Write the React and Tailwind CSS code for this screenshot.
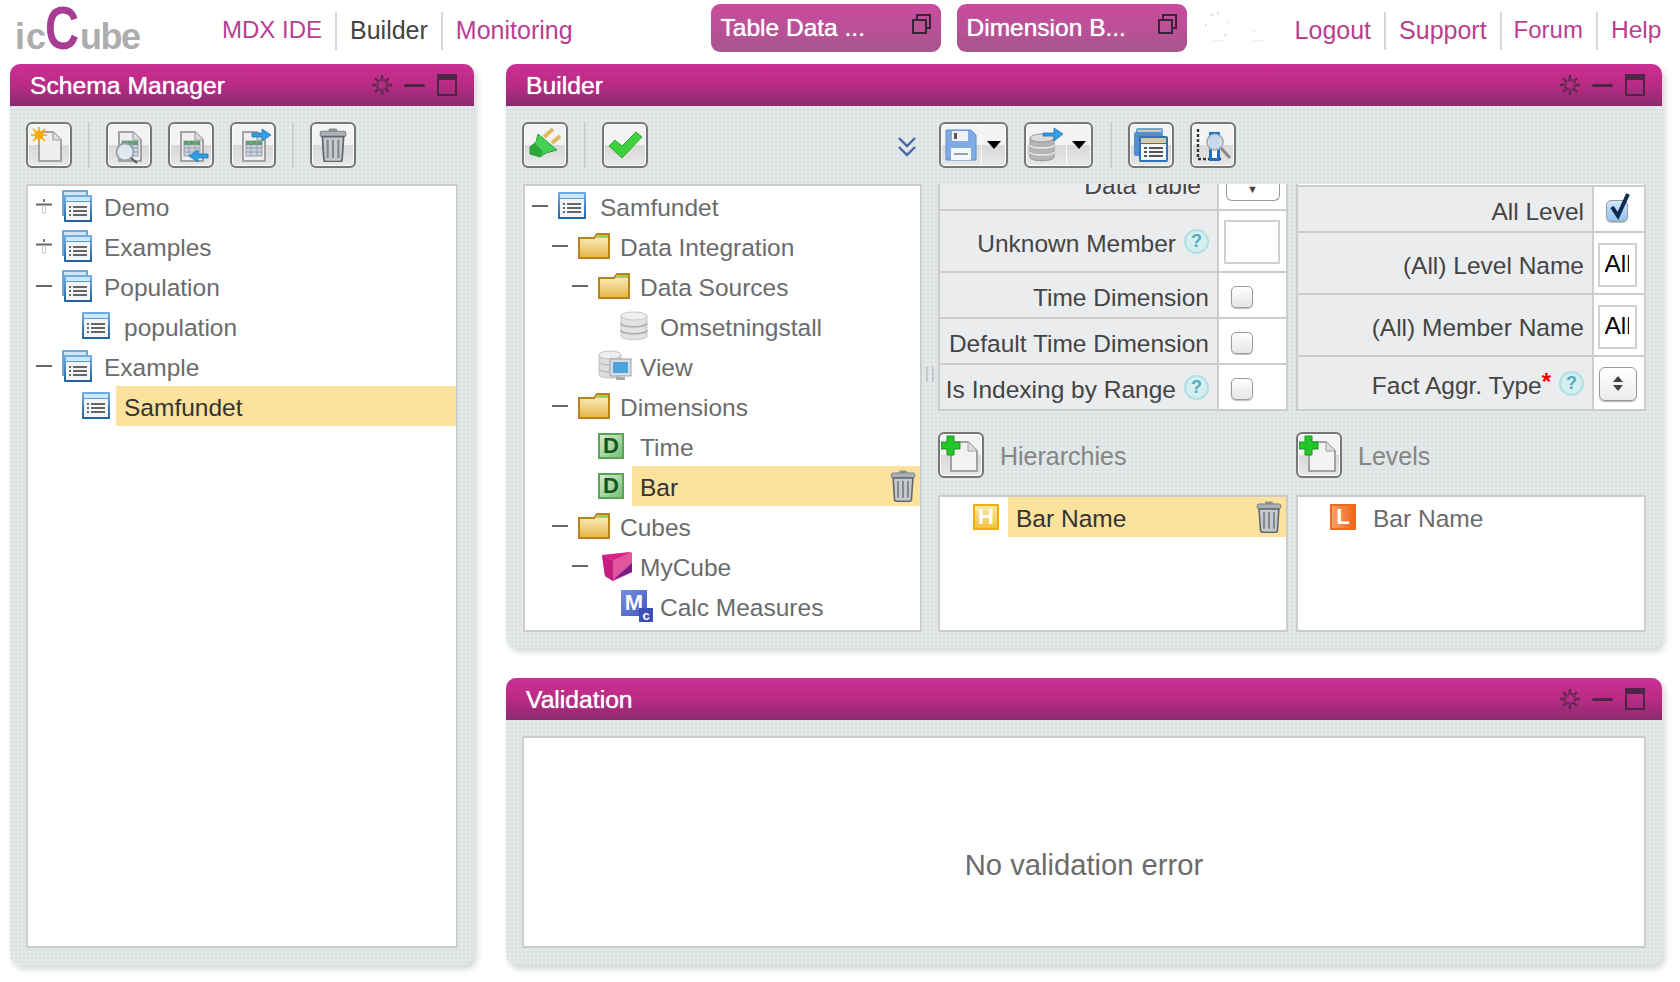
import React from 'react';

const FONT = "font-['Liberation_Sans',Arial,sans-serif]";
const PANEL = 'rounded-[10px] bg-[#e3e8e9] bg-[radial-gradient(#d8dfe0_1px,transparent_1px)] bg-[length:4px_4px] shadow-[3px_4px_6px_rgba(0,0,0,0.16)]';

const Gear = () => (
  <svg width="22" height="22" viewBox="0 0 22 22" fill="none" stroke="#5d2a50">
    <circle cx="11" cy="11" r="5" strokeWidth="2.5" strokeDasharray="2 1" />
    <path d="M11 1v4M11 17v4M1 11h4M17 11h4M4 4l3 3M15 15l3 3M18 4l-3 3M7 15l-3 3" strokeWidth="2.4" />
  </svg>
);

const WindowIcon = () => (
  <svg width="20" height="22" viewBox="0 0 20 22">
    <rect x="1" y="1" width="18" height="20" fill="none" stroke="#4d2545" strokeWidth="2" />
    <rect x="1" y="1" width="18" height="5" fill="#4d2545" />
  </svg>
);

const PanelHeader = ({ title }) => (
  <div className="flex h-[42px] shrink-0 items-center justify-between rounded-t-[10px] bg-linear-to-b from-[#cd2f93] via-[#b92b85] to-[#8a2a70] pl-[20px] pr-[17px]">
    <span className="pt-[2px] text-[24.7px] text-white [text-shadow:0_0_1px_#fff]">{title}</span>
    <div className="flex items-center">
      <Gear />
      <div className="ml-[11px] h-[3px] w-[21px] rounded-sm bg-[#4d2545]" />
      <div className="ml-[12px]"><WindowIcon /></div>
    </div>
  </div>
);

const TableGlyph = ({ x = 0, y = 0 }) => (
  <g transform={`translate(${x} ${y})`}>
    <defs>
      <linearGradient id="tableEdge" x1="0" y1="0" x2="0" y2="1">
        <stop offset="0" stopColor="#6fb0e6" />
        <stop offset="1" stopColor="#1f62a3" />
      </linearGradient>
    </defs>
    <rect width="28" height="27" rx="1" fill="url(#tableEdge)" />
    <rect x="2" y="2" width="24" height="4" fill="#cfe6f8" />
    <rect x="2" y="7" width="24" height="18" fill="#f3f6f9" />
    <path d="M5 12h2M5 16h2M5 20h2M9 12h14M9 16h14M9 20h14" stroke="#666" strokeWidth="2" />
  </g>
);

const TableIcon = () => (
  <svg width="28" height="28" viewBox="0 0 28 28"><TableGlyph /></svg>
);

const TablesIcon = () => (
  <svg width="30" height="32" viewBox="0 0 30 32">
    <rect width="26" height="26" rx="1" fill="#6aa6dc" />
    <rect x="2" y="2" width="22" height="3" fill="#cfe6f8" />
    <TableGlyph x="2" y="5" />
  </svg>
);

const FolderIcon = () => (
  <svg width="32" height="26" viewBox="0 0 32 26">
    <defs>
      <linearGradient id="folderFill" x1="0" y1="0" x2="0" y2="1">
        <stop offset="0" stopColor="#fdf2cf" />
        <stop offset="1" stopColor="#e6b544" />
      </linearGradient>
    </defs>
    <path d="M1 25V5h15l3-4h12v24z" fill="url(#folderFill)" stroke="#b5841c" strokeWidth="2" />
    <path d="M20 2h10v3H18z" fill="#a8c85a" />
  </svg>
);

const DbIcon = () => (
  <svg width="28" height="30" viewBox="0 0 28 30" className="ml-[2px]">
    <path d="M1 5v20c0 5 26 5 26 0V5z" fill="#e2e2e2" stroke="#c8c8c8" />
    <ellipse cx="14" cy="5" rx="13" ry="4" fill="#f0f0f0" stroke="#c8c8c8" />
    <path d="M1 12c0 5 26 5 26 0M1 19c0 5 26 5 26 0" fill="none" stroke="#b0b0b0" strokeWidth="1.5" />
  </svg>
);

const ViewIcon = () => (
  <svg width="34" height="32" viewBox="0 0 34 32">
    <path d="M1 5v20c0 4 22 4 22 0V5z" fill="#dedede" stroke="#c4c4c4" />
    <ellipse cx="12" cy="5" rx="11" ry="4" fill="#efefef" stroke="#c4c4c4" />
    <path d="M1 12c0 4 22 4 22 0M1 19c0 4 22 4 22 0" fill="none" stroke="#b0b0b0" />
    <rect x="12" y="9" width="21" height="17" fill="#d8dde2" stroke="#9aa2aa" />
    <rect x="15" y="12" width="15" height="11" fill="#4ba3df" />
    <rect x="18" y="27" width="9" height="3" fill="#aaa" />
  </svg>
);

const CubeIcon = () => (
  <svg width="32" height="31" viewBox="0 0 32 31" className="ml-[3px]">
    <path d="M1 4L29 1l2 20-19 9-8-5z" fill="#d81f8c" />
    <path d="M1 4l11 5 19-8v20l-19 9z" fill="#e2569f" />
    <path d="M12 29l19-8V12z" fill="#7b1f86" />
    <path d="M1 4l11 6v20l-8-5z" fill="#c51f80" />
  </svg>
);

const LetterIcon = ({ letter, box, color }) => (
  <div className={`flex h-[26px] w-[26px] items-center justify-center border-2 text-[22px] font-bold leading-none ${box} ${color}`}>{letter}</div>
);

const DimIcon = () => (
  <LetterIcon letter="D" box="border-[#57a657] bg-linear-to-br from-[#d6ecd0] to-[#7ec07a]" color="text-[#0f5a18]" />
);

const HierIcon = () => (
  <LetterIcon letter="H" box="border-[#f0ad10] bg-linear-to-b from-[#fbe7a4] to-[#f3c23c]" color="text-white" />
);

const LevelIcon = () => (
  <LetterIcon letter="L" box="border-[#ee6a1a] bg-linear-to-r from-[#f7a268] to-[#ee6412]" color="text-white" />
);

const CalcIcon = () => (
  <div className="relative ml-[3px] h-[32px] w-[32px]">
    <div className="flex h-[26px] w-[26px] items-center justify-center bg-linear-to-br from-[#7b8fe0] to-[#3f55c2] text-[22px] font-bold leading-none text-white">M</div>
    <div className="absolute bottom-0 right-0 flex h-[14px] w-[14px] items-center justify-center bg-[#3d50b5] text-[13px] font-bold leading-none text-white">c</div>
  </div>
);

const TrashIcon = ({ size = 26 }) => (
  <svg width={size} height={size * 1.22} viewBox="0 0 26 32">
    <rect x="9" y="0.5" width="8" height="3" rx="1" fill="#8c9298" />
    <rect x="1" y="3" width="24" height="5" rx="2" fill="#aab0b5" stroke="#7c8288" />
    <path d="M3 8h20l-1.5 22c0 1-1 1.5-2 1.5h-13c-1 0-2-.5-2-1.5z" fill="#c6cacd" stroke="#5f666c" strokeWidth="1.6" />
    <path d="M8 11v17M13 11v17M18 11v17" stroke="#82888e" strokeWidth="2" />
  </svg>
);

const Expander = ({ type }) => {
  if (type === 'minus') return <div className="h-[2px] w-[16px] bg-[#666]" />;
  if (type === 'plus') {
    return (
      <svg width="16" height="16" viewBox="0 0 16 16">
        <path d="M0 6.5h16" stroke="#666" strokeWidth="2" />
        <path d="M8 1v3" stroke="#777" strokeWidth="2" />
        <path d="M6.5 8h3v7h-3z" fill="none" stroke="#c4c8cc" />
      </svg>
    );
  }
  return null;
};

const levelPadding = ['pl-[7px]', 'pl-[27px]', 'pl-[47px]', 'pl-[67px]'];

const RowLabel = ({ label, selected, trash }) => (
  <div className={`-ml-[8px] flex h-full flex-1 items-center justify-between pl-[8px] pr-[4px] ${selected ? 'bg-[#fce29c] text-[#333]' : 'text-[#6b6b6b]'}`}>
    <span className="pt-[4px]">{label}</span>
    {trash && <TrashIcon />}
  </div>
);

const TreeRow = ({ level, expander, icon, label, selected, trash }) => (
  <div className={`flex h-10 items-center ${levelPadding[level]}`}>
    <div className="flex w-[16px] shrink-0 items-center justify-center"><Expander type={expander} /></div>
    <div className="ml-[10px] flex w-[42px] shrink-0 items-center">{icon}</div>
    <RowLabel label={label} selected={selected} trash={trash} />
  </div>
);

const schemaRows = [
  { level: 0, expander: 'plus', icon: <TablesIcon />, label: 'Demo' },
  { level: 0, expander: 'plus', icon: <TablesIcon />, label: 'Examples' },
  { level: 0, expander: 'minus', icon: <TablesIcon />, label: 'Population' },
  { level: 1, icon: <TableIcon />, label: 'population' },
  { level: 0, expander: 'minus', icon: <TablesIcon />, label: 'Example' },
  { level: 1, icon: <TableIcon />, label: 'Samfundet', selected: true },
];

const builderRows = [
  { level: 0, expander: 'minus', icon: <TableIcon />, label: 'Samfundet' },
  { level: 1, expander: 'minus', icon: <FolderIcon />, label: 'Data Integration' },
  { level: 2, expander: 'minus', icon: <FolderIcon />, label: 'Data Sources' },
  { level: 3, icon: <DbIcon />, label: 'Omsetningstall' },
  { level: 2, icon: <ViewIcon />, label: 'View' },
  { level: 1, expander: 'minus', icon: <FolderIcon />, label: 'Dimensions' },
  { level: 2, icon: <DimIcon />, label: 'Time' },
  { level: 2, icon: <DimIcon />, label: 'Bar', selected: true, trash: true },
  { level: 1, expander: 'minus', icon: <FolderIcon />, label: 'Cubes' },
  { level: 2, expander: 'minus', icon: <CubeIcon />, label: 'MyCube' },
  { level: 3, icon: <CalcIcon />, label: 'Calc Measures' },
];

const BTN = 'rounded-[6px] border-2 border-[#777] bg-[linear-gradient(#f3f3f3_50%,#d8d8d8_50%,#e8e8e8)] shadow-[inset_0_0_0_1px_#fafafa]';

const ToolBtn = ({ children, className = '' }) => (
  <div className={`flex h-[46px] w-[46px] shrink-0 items-center justify-center ${BTN} ${className}`}>
    {children}
  </div>
);

const ToolSep = () => <div className="mx-[16px] h-[46px] w-[2px] shrink-0 bg-[#cdd1d2]" />;

const Doc = ({ children }) => (
  <svg width="38" height="38" viewBox="0 0 38 38">
    <path d="M9 6h14l8 8v21H9z" fill="#efefef" stroke="#a2a2a2" strokeWidth="2" />
    <path d="M23 6v8h8" fill="#dedede" stroke="#a2a2a2" strokeWidth="1.2" />
    {children}
  </svg>
);

const Grid = () => (
  <g>
    <rect x="12" y="15" width="16" height="15" fill="#c9d2de" stroke="#97a2af" />
    <rect x="12" y="15" width="16" height="4" fill="#5f9e6a" />
    <path d="M17 15v15M23 15v15M12 22h16M12 26h16" stroke="#97a2af" />
  </g>
);

const NewFileIcon = () => (
  <Doc>
    <path d="M9 1v16M1 9h16M3 3l12 12M15 3L3 15" stroke="#f9a400" strokeWidth="1.6" />
    <circle cx="9" cy="9" r="4.5" fill="#ffa800" />
  </Doc>
);

const SearchDocIcon = () => (
  <Doc>
    <Grid />
    <circle cx="15" cy="26" r="8.5" fill="#e2ecf3" fillOpacity="0.9" stroke="#9aa3ad" strokeWidth="1.8" />
    <path d="M21 32l6 5" stroke="#555" strokeWidth="2" />
  </Doc>
);

const ImportDocIcon = () => (
  <Doc>
    <Grid />
    <path d="M36 28H26v-4l-9 6 9 6v-4h10z" fill="#2f9fe8" stroke="#1f74b8" strokeWidth="0.8" />
  </Doc>
);

const ExportDocIcon = () => (
  <Doc>
    <Grid />
    <path d="M18 7h10V3l9 6-9 6v-4H18z" fill="#2f9fe8" stroke="#1f74b8" strokeWidth="0.8" />
  </Doc>
);

const PlugIcon = () => (
  <svg width="38" height="38" viewBox="0 0 38 38">
    <path d="M18 11l9-8M26 17l8-7" stroke="#e0b860" strokeWidth="4" />
    <path d="M12 8l19 16-11 3-6 4-10-3v-7l6-5z" fill="#45d057" stroke="#2da23a" />
    <path d="M4 28v-7l5-4 8 9-3 5z" fill="#27a838" />
  </svg>
);

const CheckIcon = () => (
  <svg width="36" height="30" viewBox="0 0 36 30">
    <path d="M2 16l6-6 7 6L29 2l6 5-20 21z" fill="#3fd03d" stroke="#2fa82e" />
  </svg>
);

const FloppyIcon = () => (
  <svg width="32" height="32" viewBox="0 0 32 32">
    <path d="M1 1h25l5 5v25H1z" fill="#7eabe4" stroke="#5f8fd0" />
    <rect x="7" y="2" width="16" height="10" fill="#eef2f7" />
    <rect x="9" y="4" width="3" height="6" fill="#555" />
    <rect x="6" y="19" width="20" height="12" fill="#f3f6fa" />
    <path d="M9 25h14" stroke="#8fa2b8" strokeWidth="2" />
  </svg>
);

const DbExportIcon = () => (
  <svg width="36" height="36" viewBox="0 0 36 36">
    <path d="M2 11v19c0 5 24 5 24 0V11z" fill="#b5b5b5" stroke="#969696" />
    <ellipse cx="14" cy="11" rx="12" ry="4" fill="#dcdcdc" stroke="#969696" />
    <path d="M2 18c0 4 24 4 24 0M2 25c0 4 24 4 24 0" fill="none" stroke="#ececec" strokeWidth="1.5" />
    <path d="M15 6h11V1l9 6-9 7V9H15z" fill="#2f9fe8" stroke="#1f74b8" strokeWidth="0.8" />
  </svg>
);

const TablesBigIcon = () => (
  <svg width="36" height="36" viewBox="0 0 36 36">
    <rect x="3" y="1" width="27" height="24" rx="2" fill="#6aa6dc" />
    <rect x="5" y="3" width="23" height="4" fill="#d9c8a8" />
    <rect x="1" y="5" width="28" height="24" rx="2" fill="#4f8fd0" />
    <rect x="6" y="9" width="29" height="26" rx="2" fill="#2f74b5" />
    <rect x="8" y="11" width="25" height="5" fill="#d9c8a8" />
    <rect x="8" y="17" width="25" height="16" fill="#f3f6f9" />
    <path d="M11 21h3M11 25h3M11 29h3M16 21h14M16 25h14M16 29h14" stroke="#555" strokeWidth="2" />
  </svg>
);

const ChartSearchIcon = () => (
  <svg width="38" height="38" viewBox="0 0 38 38">
    <path d="M4 3v30h24" fill="none" stroke="#333" strokeWidth="2.4" strokeDasharray="3 2" />
    <rect x="15" y="6" width="11" height="29" rx="1" fill="#1d6fc2" />
    <rect x="18" y="24" width="5" height="8" fill="#fff" />
    <circle cx="21" cy="16" r="8" fill="#d7e6f1" fillOpacity="0.9" stroke="#a0a8b0" strokeWidth="1.6" />
    <path d="M27 22l9 10" stroke="#888" strokeWidth="3" />
  </svg>
);

const Caret = () => <div className="h-0 w-0 border-x-[7px] border-t-[8px] border-x-transparent border-t-black" />;

const SplitBtn = ({ children }) => (
  <div className={`flex h-[46px] w-[69px] shrink-0 ${BTN}`}>
    <div className="flex w-[41px] items-center justify-center border-r border-[#fafafa]">{children}</div>
    <div className="flex flex-1 items-center justify-center"><Caret /></div>
  </div>
);

const Help = () => (
  <div className="ml-[8px] flex h-[25px] w-[25px] shrink-0 items-center justify-center rounded-full border-2 border-[#aee0e4] bg-[#d5eff1] text-[18px] font-bold leading-none text-[#4fadbd]">?</div>
);

const Checkbox = ({ checked }) => (
  <div className={`relative h-[22px] w-[22px] rounded-[5px] border border-[#9a9a9a] shadow-[0_1px_1px_rgba(0,0,0,0.25)] ${checked ? 'bg-linear-to-b from-[#cfe6fa] to-[#8fc2ee]' : 'bg-linear-to-b from-white to-[#e6e6e6]'}`}>
    {checked && (
      <svg width="26" height="30" viewBox="0 0 26 30" className="absolute -top-[9px] left-0">
        <path d="M5 15l6 9L21 2" fill="none" stroke="#0d2a4d" strokeWidth="4" />
      </svg>
    )}
  </div>
);

const ClippedInput = () => (
  <div className="mr-[4px] mt-[3px] h-[44px] w-[39px] border-2 border-[#d0d0d0] bg-white pl-[5px] leading-[38px] text-black">
    <div className="w-[24px] overflow-hidden">All</div>
  </div>
);

const FormRow = ({ height, label, help, required, children, labelWidth }) => (
  <div className={`flex border-b-2 border-[#cccccc] ${height}`}>
    <div className={`flex items-center justify-end border-r-2 border-[#cccccc] bg-[#ebecee] pr-[8px] text-[#444] ${labelWidth}`}>
      <span className="pt-[6px]">{label}</span>
      {required && <span className="self-start pt-[13px] text-[24px] font-bold leading-none text-[#f00000]">*</span>}
      {help && <Help />}
    </div>
    <div className="flex flex-1 items-center justify-center bg-white">{children}</div>
  </div>
);

const ListRow = ({ icon, label, selected, className }) => (
  <div className={`flex h-10 items-center ${className}`}>
    <div className="flex w-[43px] shrink-0 items-center">{icon}</div>
    <RowLabel label={label} selected={selected} trash={selected} />
  </div>
);

const AddIcon = () => (
  <svg width="40" height="40" viewBox="0 0 40 40">
    <path d="M10 7h17l9 9v20H10z" fill="#f2f2f2" stroke="#a2a2a2" strokeWidth="2" />
    <path d="M27 7v9h9" fill="#dedede" stroke="#a2a2a2" />
    <path d="M6 1h7v6h6v7h-6v6H6v-6H0V7h6z" fill="#22c52a" stroke="#149a1c" />
  </svg>
);

const Logo = () => (
  <div className="flex h-[50px] w-[126px] items-baseline font-bold text-[#adadad]">
    <span className="w-[30px] text-[36px] leading-[50px] tracking-[1px]">ic</span>
    <span className="w-[35px] origin-left scale-x-[0.76] text-[62px] leading-[50px] text-[#a63d92]">C</span>
    <span className="text-[36px] leading-[50px] tracking-[-1.5px]">ube</span>
  </div>
);

const NavSep = () => <div className="h-[38px] w-[2px] bg-[#d6d6d6]" />;

const Restore = () => (
  <svg width="19" height="20" viewBox="0 0 19 20" fill="none" stroke="#3a2335" strokeWidth="2">
    <rect x="1" y="6" width="13" height="13" />
    <path d="M5 5V1h13v13h-3" />
  </svg>
);

const TabButton = ({ label, className = '' }) => (
  <div className={`flex h-[48px] w-[230px] shrink-0 items-center justify-between rounded-[9px] bg-linear-to-b from-[#cb4a9f] to-[#a8558e] px-[10px] text-white [text-shadow:0_0_1px_#fff] ${className}`}>
    <span className="pb-[1px]">{label}</span>
    <div className="pb-[8px]"><Restore /></div>
  </div>
);

// faint specks left in the header next to the tabs
const Specks = () => (
  <svg width="80" height="50" viewBox="0 0 80 50" className="shrink-0">
    <g fill="#dfe2f0">
      <circle cx="9" cy="15" r="1.6" />
      <circle cx="15" cy="13" r="1.2" />
      <circle cx="3" cy="25" r="1.2" />
      <circle cx="25" cy="22" r="1.6" fill="#eeeeee" />
      <circle cx="22" cy="35" r="1.6" />
      <circle cx="51" cy="31" r="1.4" fill="#eeeeee" />
    </g>
    <path d="M10 41h12M50 41h12" stroke="#f3dfe9" />
  </svg>
);

export default function App() {
  return (
    <div className={`h-[982px] w-[1680px] overflow-hidden bg-white text-[24.5px] leading-[28px] ${FONT}`}>
      {/* Top bar */}
      <div className="flex h-[64px]">
        <div className="ml-[15px] mt-[3px]"><Logo /></div>
        <div className="ml-[81px] mt-[12px] flex h-[38px] items-center text-[25px] text-[#b9408f]">
          <span className="pb-[2px] text-[24px]">MDX IDE</span>
          <div className="mx-[13px]"><NavSep /></div>
          <span className="pb-[2px] text-[#444]">Builder</span>
          <div className="mx-[13px]"><NavSep /></div>
          <span className="pb-[2px]">Monitoring</span>
        </div>
        <div className="ml-[138px] mt-[4px] flex">
          <TabButton label="Table Data ..." />
          <TabButton label="Dimension B..." className="ml-[16px]" />
        </div>
        <div className="ml-[16px]"><Specks /></div>
        <div className="ml-[12px] mt-[12px] flex h-[38px] items-center text-[25px] text-[#b9408f]">
          <span className="pb-[2px]">Logout</span>
          <div className="mx-[13px]"><NavSep /></div>
          <span className="pb-[2px]">Support</span>
          <div className="ml-[13px] mr-[12px]"><NavSep /></div>
          <span className="pb-[2px] text-[24px]">Forum</span>
          <div className="mx-[13px]"><NavSep /></div>
          <span className="pb-[2px] text-[24.5px]">Help</span>
        </div>
      </div>

      <div className="flex pl-[10px]">
        {/* Schema Manager */}
        <div className={`flex h-[901px] w-[464px] flex-col ${PANEL}`}>
          <PanelHeader title="Schema Manager" />
          <div className="flex h-[78px] shrink-0 items-start pl-[16px] pt-[16px]">
            <ToolBtn><NewFileIcon /></ToolBtn>
            <ToolSep />
            <ToolBtn><SearchDocIcon /></ToolBtn>
            <ToolBtn className="ml-[16px]"><ImportDocIcon /></ToolBtn>
            <ToolBtn className="ml-[16px]"><ExportDocIcon /></ToolBtn>
            <ToolSep />
            <ToolBtn><TrashIcon size={28} /></ToolBtn>
          </div>
          <div className="ml-[16px] h-[764px] w-[432px] border-2 border-[#cccccc] bg-white pl-[1px]">
            {schemaRows.map((row) => <TreeRow key={row.label} {...row} />)}
          </div>
        </div>

        <div className="ml-[32px] flex w-[1156px] flex-col">
          {/* Builder */}
          <div className={`flex h-[584px] flex-col ${PANEL}`}>
            <PanelHeader title="Builder" />
            <div className="flex h-[78px] shrink-0 items-start pl-[16px] pt-[16px]">
              <ToolBtn><PlugIcon /></ToolBtn>
              <ToolSep />
              <ToolBtn><CheckIcon /></ToolBtn>
              <svg width="20" height="22" viewBox="0 0 20 22" fill="none" stroke="#4a66a8" strokeWidth="2.4" className="ml-[249px] mt-[14px] shrink-0">
                <path d="M2 2l8 8 8-8M2 11l8 8 8-8" />
              </svg>
              <div className="ml-[22px]"><SplitBtn><FloppyIcon /></SplitBtn></div>
              <div className="ml-[16px]"><SplitBtn><DbExportIcon /></SplitBtn></div>
              <div className="w-[1px] shrink-0" />
              <ToolSep />
              <ToolBtn><TablesBigIcon /></ToolBtn>
              <ToolBtn className="ml-[16px]"><ChartSearchIcon /></ToolBtn>
            </div>
            <div className="flex pl-[17px]">
              <div className="h-[448px] w-[399px] shrink-0 border-2 border-[#cccccc] bg-white">
                {builderRows.map((row) => <TreeRow key={row.label} {...row} />)}
              </div>
              <div className="flex w-[16px] shrink-0 items-center justify-center pb-[68px]">
                <div className="h-[15px] w-[8px] border-x-2 border-[#c4c8ca]" />
              </div>
              <div className="w-[708px] shrink-0">
                <div className="flex h-[227px] gap-[8px]">
                  <div className="w-[350px] border-x-2 border-[#cccccc]">
                    <div className="flex h-[27px] overflow-hidden border-b-2 border-[#cccccc]">
                      <div className="flex w-[279px] justify-end border-r-2 border-[#cccccc] bg-[#ebecee] pr-[16px] text-[#444]">
                        <span className="-mt-[12px]">Data Table</span>
                      </div>
                      <div className="flex flex-1 justify-center bg-white">
                        <div className="flex h-[17px] w-[54px] items-start justify-center rounded-b-[6px] border border-t-0 border-[#999] text-[11px] leading-[11px] text-[#444]">▼</div>
                      </div>
                    </div>
                    <FormRow height="h-[62px]" labelWidth="w-[279px]" label="Unknown Member" help>
                      <div className="mr-[2px] mt-[2px] h-[44px] w-[56px] border-2 border-[#d0d0d0] bg-white" />
                    </FormRow>
                    <FormRow height="h-[46px]" labelWidth="w-[279px]" label="Time Dimension">
                      <div className="mr-[22px] mt-[3px]"><Checkbox /></div>
                    </FormRow>
                    <FormRow height="h-[46px]" labelWidth="w-[279px]" label="Default Time Dimension">
                      <div className="mr-[22px] mt-[3px]"><Checkbox /></div>
                    </FormRow>
                    <FormRow height="h-[46px]" labelWidth="w-[279px]" label="Is Indexing by Range" help>
                      <div className="mr-[22px] mt-[3px]"><Checkbox /></div>
                    </FormRow>
                  </div>
                  <div className="w-[350px] border-x-2 border-[#cccccc]">
                    <div className="h-[3px] border-b-2 border-[#cccccc] bg-white" />
                    <FormRow height="h-[46px]" labelWidth="w-[296px]" label="All Level">
                      <div className="mr-[5px] mt-[3px]"><Checkbox checked /></div>
                    </FormRow>
                    <FormRow height="h-[62px]" labelWidth="w-[296px]" label="(All) Level Name">
                      <ClippedInput />
                    </FormRow>
                    <FormRow height="h-[62px]" labelWidth="w-[296px]" label="(All) Member Name">
                      <ClippedInput />
                    </FormRow>
                    <FormRow height="h-[54px]" labelWidth="w-[296px]" label="Fact Aggr. Type" required help>
                      <div className="mr-[2px] mt-[1px] flex h-[34px] w-[38px] flex-col items-center justify-center gap-[3px] rounded-[6px] border border-[#999] bg-linear-to-b from-white to-[#ececec] shadow-[0_1px_1px_rgba(0,0,0,0.3)]">
                        <div className="h-0 w-0 border-x-[5px] border-b-[6px] border-x-transparent border-b-[#444]" />
                        <div className="h-0 w-0 border-x-[5px] border-t-[6px] border-x-transparent border-t-[#444]" />
                      </div>
                    </FormRow>
                  </div>
                </div>
                <div className="mt-[21px] flex h-[46px] gap-[8px] text-[25px] text-[#858585]">
                  <div className="flex w-[350px] items-center">
                    <ToolBtn><AddIcon /></ToolBtn>
                    <span className="ml-[16px] pt-[2px]">Hierarchies</span>
                  </div>
                  <div className="flex w-[350px] items-center">
                    <ToolBtn><AddIcon /></ToolBtn>
                    <span className="ml-[16px] pt-[2px]">Levels</span>
                  </div>
                </div>
                <div className="mt-[17px] flex gap-[8px]">
                  <div className="h-[137px] w-[350px] border-2 border-[#cccccc] bg-white">
                    <ListRow icon={<HierIcon />} label="Bar Name" selected className="pl-[33px]" />
                  </div>
                  <div className="h-[137px] w-[350px] border-2 border-[#cccccc] bg-white">
                    <ListRow icon={<LevelIcon />} label="Bar Name" className="pl-[32px]" />
                  </div>
                </div>
              </div>
            </div>
          </div>

          {/* Validation */}
          <div className={`mt-[30px] flex h-[287px] flex-col ${PANEL}`}>
            <PanelHeader title="Validation" />
            <div className="mx-[16px] mt-[16px] flex h-[212px] items-center justify-center border-2 border-[#cccccc] bg-white pt-[46px] text-[29.2px] text-[#6b6b6b]">
              No validation error
            </div>
          </div>
        </div>
      </div>
    </div>
  );
}
